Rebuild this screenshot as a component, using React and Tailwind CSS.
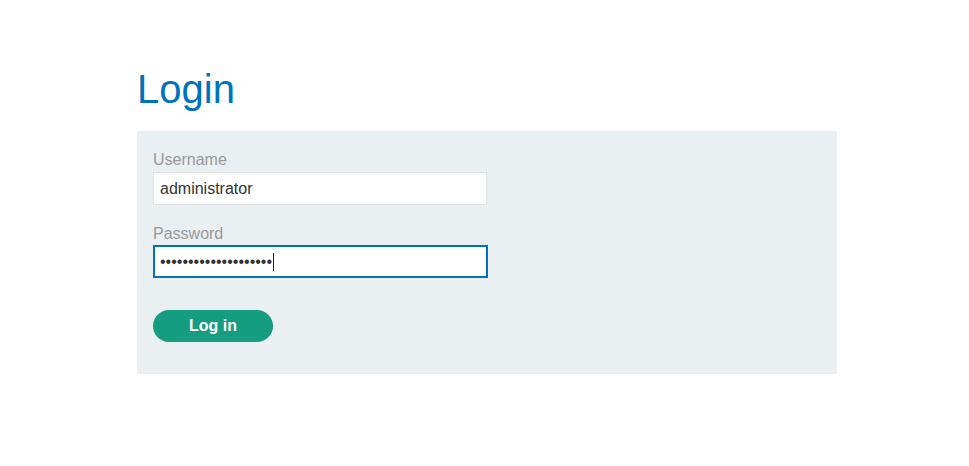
const App = () => {
  return (
    <div className="min-h-screen bg-white font-['Liberation_Sans',Arial,sans-serif]">
      <div className="ml-[137px] w-[700px] pt-[66px]">
        <h1 className="text-[40px] leading-[46px] text-[#0071bc]">Login</h1>
        <form className="mt-[19px] bg-[#eaeff2] px-4 pt-[19px] pb-8">
          <label className="block text-base leading-5 text-[#999999]">Username</label>
          <input
            type="text"
            readOnly
            value="administrator"
            className="mt-[2px] block h-[33px] w-[334px] border border-[#e0e3e5] bg-white px-[6px] text-base text-[#333333] outline-none"
          />
          <label className="mt-[19px] block text-base leading-5 text-[#999999]">Password</label>
          <div className="mt-px flex h-[33px] w-[335px] items-center border-2 border-[#0071bc] bg-white px-[5px] text-base text-[#333333]">
            <span className="leading-none">••••••••••••••••••••</span>
            <span className="ml-px h-[18px] w-px bg-[#222222]"></span>
          </div>
          <button
            type="button"
            className="mt-8 block h-8 w-[120px] rounded-full bg-[#169c80] text-base font-bold text-white"
          >
            Log in
          </button>
        </form>
      </div>
    </div>
  );
};

export default App;
